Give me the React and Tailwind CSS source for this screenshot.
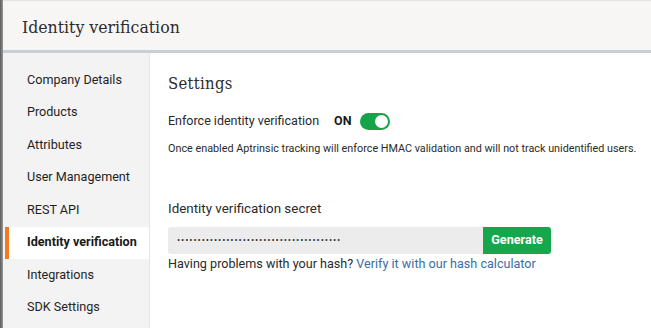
import React, { useState } from "react";

const navItems = [
  "Company Details",
  "Products",
  "Attributes",
  "User Management",
  "REST API",
  "Identity verification",
  "Integrations",
  "SDK Settings",
];

const slab = { fontFamily: '"DejaVu Serif Condensed", "DejaVu Serif", serif' };

const App = () => {
  const [enabled, setEnabled] = useState(true);
  const active = "Identity verification";

  return (
    <div
      className="w-[651px] h-[328px] overflow-hidden flex bg-white text-[#2a2a2a]"
      style={{ fontFamily: 'Roboto, "Liberation Sans", sans-serif' }}
    >
      {/* left edge */}
      <div className="w-[3px] shrink-0 bg-gradient-to-r from-[#5a5a5a] to-[#9a9a9a]" />

      <div className="flex-1 flex flex-col">
        {/* Header */}
        <div className="h-[50px] shrink-0 bg-[#f7f6f5] border-t border-[#e2e2e2] flex items-center px-[19px] pt-[3px]">
          <h1 className="text-[17.5px] text-[#2c2c2c]" style={slab}>
            Identity verification
          </h1>
        </div>
        <div className="h-[3px] shrink-0 bg-[#c7cfd3]" />

        <div className="flex flex-1">
          {/* Sidebar */}
          <nav className="w-[147px] shrink-0 bg-[#f3f3f3] border-r border-[#e4e4e4] pt-[11px]">
            {navItems.map((item) => (
              <div
                key={item}
                className={
                  item === active
                    ? "h-[32.5px] flex items-center pl-[18px] bg-white border-l-[4px] border-[#f57a1f] ml-[2px] font-bold text-[12.6px] text-[#1a1a1a]"
                    : "h-[32.5px] flex items-center pl-[24px] text-[12.6px] text-[#1f1f1f]"
                }
              >
                {item}
              </div>
            ))}
          </nav>

          {/* Main */}
          <main className="flex-1 pl-[18px] pt-[19px]">
            <h2 className="text-[16.5px] text-[#2c2c2c] tracking-[0.3px]" style={slab}>
              Settings
            </h2>

            <div className="flex items-center mt-[15px] h-[20px]">
              <span className="text-[12.5px]">Enforce identity verification</span>
              <span className="ml-[15px] text-[12.5px] font-bold text-[#1a1a1a]">ON</span>
              <button
                type="button"
                onClick={() => setEnabled(!enabled)}
                className={
                  enabled
                    ? "ml-[8px] w-[30px] h-[17px] rounded-full bg-[#16a34a] flex items-center justify-end px-[2px]"
                    : "ml-[8px] w-[30px] h-[17px] rounded-full bg-[#bbb] flex items-center justify-start px-[2px]"
                }
              >
                <span className="w-[13px] h-[13px] rounded-full bg-white" />
              </button>
            </div>

            <p className="text-[10.8px] mt-[9px]">
              Once enabled Aptrinsic tracking will enforce HMAC validation and will not track unidentified users.
            </p>

            <div className="text-[13.4px] mt-[42px]">Identity verification secret</div>

            <div className="flex mt-[8px] h-[27px] w-[383px]">
              <div className="flex-1 bg-[#ececec] rounded-l-[3px] flex items-center pl-[9px] text-[9.5px] text-[#333] tracking-[0.9px]">
                ••••••••••••••••••••••••••••••••••••••••
              </div>
              <button
                type="button"
                className="w-[68px] bg-[#16a64b] text-white font-bold text-[12.6px] rounded-r-[3px]"
              >
                Generate
              </button>
            </div>

            <p className="text-[12.6px] mt-[1px]">
              Having problems with your hash?{" "}
              <a href="#" className="text-[#3a6ea5]">
                Verify it with our hash calculator
              </a>
            </p>
          </main>
        </div>
      </div>
    </div>
  );
};

export default App;
